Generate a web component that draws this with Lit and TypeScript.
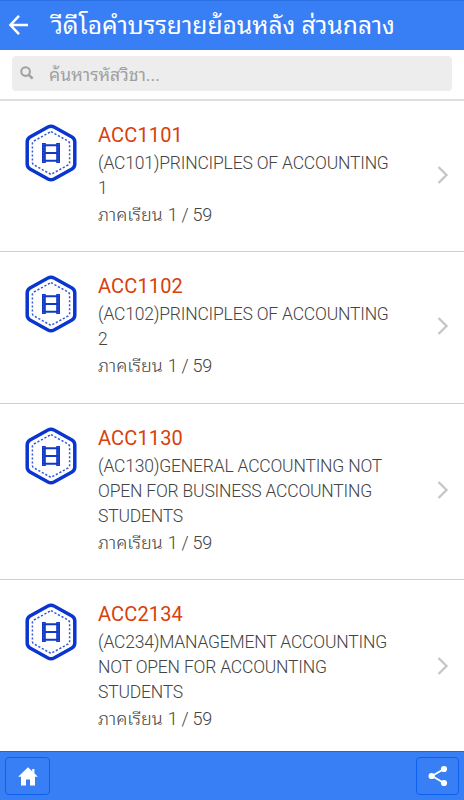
import { LitElement, html, css, svg } from "lit";
import { customElement, property } from "lit/decorators.js";

interface Course {
  code: string;
  lines: string[];
  term: string;
}

const COURSES: Course[] = [
  { code: "ACC1101", lines: ["(AC101)PRINCIPLES OF ACCOUNTING", "1"], term: "1 / 59" },
  { code: "ACC1102", lines: ["(AC102)PRINCIPLES OF ACCOUNTING", "2"], term: "1 / 59" },
  { code: "ACC1130", lines: ["(AC130)GENERAL ACCOUNTING NOT", "OPEN FOR BUSINESS ACCOUNTING", "STUDENTS"], term: "1 / 59" },
  { code: "ACC2134", lines: ["(AC234)MANAGEMENT ACCOUNTING", "NOT OPEN FOR ACCOUNTING", "STUDENTS"], term: "1 / 59" },
];

const badge = svg`
  <path d="M25 3 Q28 1.4 31 3 L49 13 Q51.8 14.6 51.8 18 V40 Q51.8 43.4 49 45 L31 55 Q28 56.6 25 55 L7 45 Q4.2 43.4 4.2 40 V18 Q4.2 14.6 7 13 Z"
    fill="none" stroke="#0a35cf" stroke-width="3.5" stroke-linejoin="round"/>
  <path d="M28 7.6 L45 17 Q46.6 18 46.6 19.7 V38.3 Q46.6 40 45 41 L28 50.4 L11 41 Q9.4 40 9.4 38.3 V19.7 Q9.4 18 11 17 Z"
    fill="none" stroke="#3458d6" stroke-width="1.5" stroke-dasharray="2.2 1.8"/>
  <path d="M20.9 19 V39 M35.1 19 V39" stroke="#1238c8" stroke-width="3.8"/>
  <path d="M20.9 20 V38.5 M35.1 20 V38.5" stroke="#4e6edb" stroke-width="0.9" stroke-dasharray="1.2 1.6"/>
  <path d="M22 21.2 H34 M22 29 H34 M22 36.8 H34" stroke="#1238c8" stroke-width="1.9"/>`;

@customElement("course-row")
class CourseRow extends LitElement {
  @property({ attribute: false }) course!: Course;

  static styles = css`
    :host {
      display: flex;
      box-sizing: border-box;
      flex: none;
      border-bottom: 1px solid #cfcfcf;
      padding: 21px 14px 23.6px 23px;
    }
    .badge { flex: none; width: 56px; height: 58px; margin-top: 2px; }
    .body { flex: 1; margin-left: 19px; white-space: nowrap; color: #444; }
    .code { font-size: 20px; line-height: 27px; color: #d8400c; letter-spacing: 0.15px; margin-bottom: 2px; }
    .line { font-size: 17.5px; font-weight: 300; line-height: 24.9px; letter-spacing: -0.2px; }
    .term { font-size: 18px; font-weight: 300; line-height: 25px; height: 25px; margin-top: 1px; margin-bottom: 1px; display: flex; gap: 5px; }
    .num { font-size: 18px; letter-spacing: -0.25px; }
    .chevron { flex: none; align-self: center; width: 14px; height: 20px; }
  `;

  render() {
    const c = this.course;
    return html`
      <svg class="badge" viewBox="0 0 56 58">${badge}</svg>
      <div class="body">
        <div class="code">${c.code}</div>
        ${c.lines.map((l) => html`<div class="line">${l}</div>`)}
        <div class="term"><span>ภาคเรียน</span><span class="num">${c.term}</span></div>
      </div>
      <svg class="chevron" viewBox="0 0 14 20">
        <path d="M2.5 2 L10.5 10 L2.5 18" fill="none" stroke="#c7c7c7" stroke-width="2.4" />
      </svg>`;
  }
}

@customElement("app-root")
class AppRoot extends LitElement {
  static styles = css`
    :host {
      display: flex;
      flex-direction: column;
      width: 464px;
      height: 800px;
      overflow: hidden;
      background: #fff;
      font-family: Roboto, "Noto Sans Thai Looped", "Noto Looped Thai", Loma, Garuda, Waree, "Noto Sans Thai", "Noto Sans", sans-serif;
    }
    .top {
      flex: none;
      box-sizing: border-box;
      height: 50px;
      display: flex;
      align-items: center;
      background: #387ef5;
      border-top: 1px solid #2a6fe2;
      color: #fff;
      padding-left: 8px;
    }
    .back { width: 22px; height: 22px; margin-top: -2px; }
    .heading { margin: 0 0 0 21px; font-size: 24.6px; font-weight: 400; line-height: 48px; white-space: nowrap; }
    .search {
      flex: none;
      box-sizing: border-box;
      height: 51px;
      padding: 6px 12px 8px;
      border-bottom: 2px solid #e0e0e0;
    }
    .field {
      height: 35px;
      border-radius: 4px;
      background: #ededed;
      display: flex;
      align-items: center;
      padding-left: 8px;
      color: #a0a0a0;
      font-size: 17.6px;
    }
    .lens { width: 14px; height: 14px; margin-top: -2px; }
    .hint { margin-left: 15px; margin-top: -2px; white-space: nowrap; }
    .list { flex: 1; min-height: 0; overflow: hidden; display: flex; flex-direction: column; }
    .bottom {
      flex: none;
      box-sizing: border-box;
      height: 49px;
      display: flex;
      justify-content: space-between;
      align-items: flex-start;
      background: #387ef5;
      border-top: 1px solid #1b66e0;
      padding: 5px 5px 0;
    }
    .btn {
      box-sizing: border-box;
      width: 45px;
      height: 38px;
      border: 1px solid #0c60ee;
      border-radius: 4px;
      display: flex;
      align-items: center;
      justify-content: center;
    }
    .btn.share { width: 43px; }
    .glyph { width: 22px; height: 22px; }
  `;

  render() {
    return html`
      <header class="top">
        <svg class="back" viewBox="0 0 22 22">
          <path d="M20 11 H3 M11 1.8 L2.4 11 L11 20.2" fill="none" stroke="#fff" stroke-width="2.5" />
        </svg>
        <h1 class="heading">วีดีโอคำบรรยายย้อนหลัง ส่วนกลาง</h1>
      </header>
      <div class="search">
        <div class="field">
          <svg class="lens" viewBox="0 0 14 14">
            <circle cx="5.6" cy="5.6" r="4.3" fill="none" stroke="#a0a0a0" stroke-width="2" />
            <path d="M8.8 8.8 L12.6 12.6" stroke="#a0a0a0" stroke-width="2.5" />
          </svg>
          <span class="hint">ค้นหารหัสวิชา...</span>
        </div>
      </div>
      <main class="list">${COURSES.map((c) => html`<course-row .course=${c}></course-row>`)}</main>
      <footer class="bottom">
        <div class="btn">
          <svg class="glyph" viewBox="0 0 22 22">
            <path d="M11 2.2 L15.2 6.2 V4 H17.4 V8.3 L20.8 11.7 H18 V20.5 H13 V14.5 H9 V20.5 H4 V11.7 H1.2 Z" fill="#fff" />
          </svg>
        </div>
        <div class="btn share">
          <svg class="glyph" viewBox="0 0 22 22">
            <path d="M17 4 L5 11 L17 18" fill="none" stroke="#fff" stroke-width="1.8" />
            <circle cx="17" cy="4" r="3.1" fill="#fff" />
            <circle cx="4.6" cy="11" r="3.1" fill="#fff" />
            <circle cx="17" cy="18" r="3.1" fill="#fff" />
          </svg>
        </div>
      </footer>`;
  }
}
